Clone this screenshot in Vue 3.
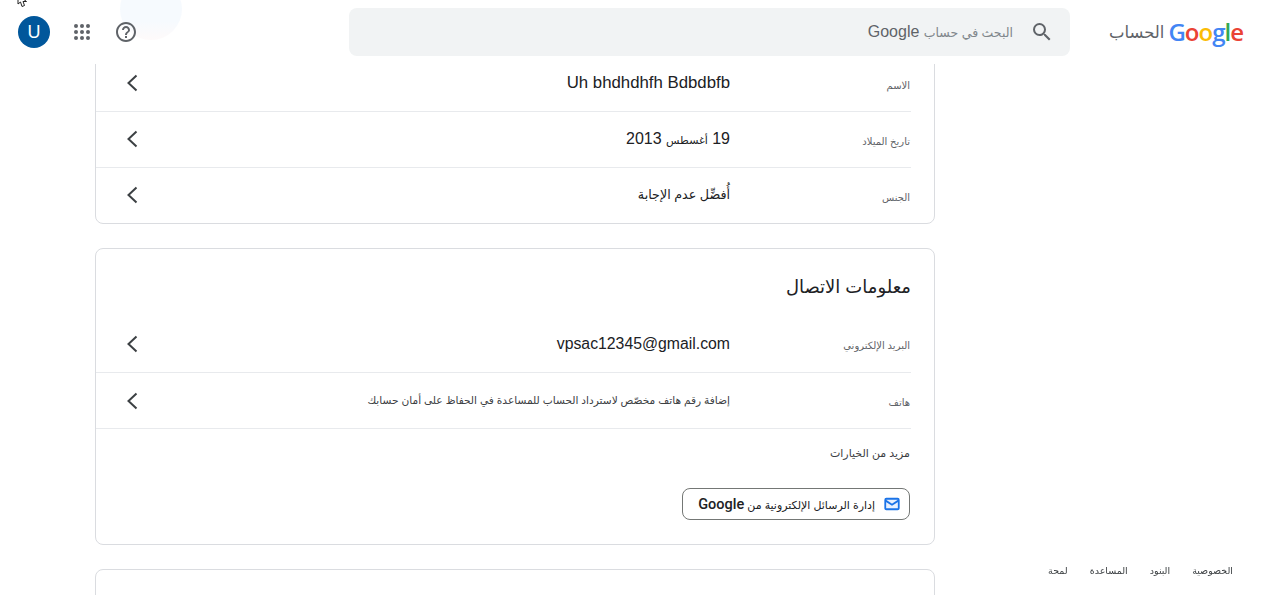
<script setup>
const logoLetters = [
  { ch: 'G', color: '#4285f4' },
  { ch: 'o', color: '#ea4335' },
  { ch: 'o', color: '#fbbc05' },
  { ch: 'g', color: '#4285f4' },
  { ch: 'l', color: '#34a853' },
  { ch: 'e', color: '#ea4335' },
]

const footerLinks = ['الخصوصية', 'البنود', 'المساعدة', 'لمحة']
</script>

<template>
  <div class="page" dir="rtl">
    <header class="topbar">
      <div class="logo">
        <span class="logo-word" dir="ltr">
          <span v-for="(l, i) in logoLetters" :key="i" :style="{ color: l.color }">{{ l.ch }}</span>
        </span>
        <span class="logo-product">الحساب</span>
      </div>
      <div class="search">
        <svg class="search-icon" width="24" height="24" viewBox="0 0 24 24">
          <path fill="#5f6368" d="M15.5 14h-.79l-.28-.27A6.47 6.47 0 0 0 16 9.5 6.5 6.5 0 1 0 9.5 16c1.61 0 3.09-.59 4.23-1.57l.27.28v.79l5 4.99L20.49 19l-4.99-5zm-6 0C7.01 14 5 11.99 5 9.500S7.01 5 9.500 5 14 7.010 14 9.500 11.990 14 9.500 14z" />
        </svg>
        <span class="search-text"><span class="ar">البحث في حساب</span> Google</span>
      </div>
      <div class="ghost-photo"></div>
      <div class="bar-icons">
        <svg class="help" width="24" height="24" viewBox="0 0 24 24">
          <path fill="#5f6368" d="M11 18h2v-2h-2v2zm1-16C6.480 2 2 6.480 2 12s4.480 10 10 10 10-4.480 10-10S17.520 2 12 2zm0 18c-4.410 0-8-3.590-8-8s3.590-8 8-8 8 3.590 8 8-3.590 8-8 8zm0-14c-2.210 0-4 1.790-4 4h2c0-1.100.9-2 2-2s2 .9 2 2c0 2-3 1.750-3 5h2c0-2.250 3-2.500 3-5 0-2.210-1.790-4-4-4z" />
        </svg>
        <svg class="apps" width="24" height="24" viewBox="0 0 24 24">
          <g fill="#5f6368">
            <circle cx="6" cy="6" r="2" /><circle cx="12" cy="6" r="2" /><circle cx="18" cy="6" r="2" />
            <circle cx="6" cy="12" r="2" /><circle cx="12" cy="12" r="2" /><circle cx="18" cy="12" r="2" />
            <circle cx="6" cy="18" r="2" /><circle cx="12" cy="18" r="2" /><circle cx="18" cy="18" r="2" />
          </g>
        </svg>
        <div class="avatar">U</div>
      </div>
      <svg class="pointer" width="12" height="8" viewBox="0 0 12 8">
        <path fill="#fff" stroke="#222" stroke-width="1" d="M1-5V4L3.500 2 5 6.500 7.500 5.500 6 1.500 9.500 1.500Z" />
      </svg>
    </header>

    <main class="content">
      <section class="card card-first">
        <div class="row">
          <div class="row-label">الاسم</div>
          <div class="row-value latin name">Uh bhdhdhfh Bdbdbfb</div>
          <svg class="chevron" width="24" height="24" viewBox="0 0 24 24">
            <path fill="none" stroke="#3c4043" stroke-width="2" d="M16.500 4.500 8.500 12l8 7.500" />
          </svg>
        </div>
        <div class="row">
          <div class="row-label">تاريخ الميلاد</div>
          <div class="row-value latin">19 <span class="month">أغسطس</span> 2013</div>
          <svg class="chevron" width="24" height="24" viewBox="0 0 24 24">
            <path fill="none" stroke="#3c4043" stroke-width="2" d="M16.500 4.500 8.500 12l8 7.500" />
          </svg>
        </div>
        <div class="row">
          <div class="row-label">الجنس</div>
          <div class="row-value ar-value">أُفضِّل عدم الإجابة</div>
          <svg class="chevron" width="24" height="24" viewBox="0 0 24 24">
            <path fill="none" stroke="#3c4043" stroke-width="2" d="M16.500 4.500 8.500 12l8 7.500" />
          </svg>
        </div>
      </section>

      <section class="card card-contact">
        <h2 class="card-title">معلومات الاتصال</h2>
        <div class="row">
          <div class="row-label">البريد الإلكتروني</div>
          <div class="row-value latin email">vpsac12345@gmail.com</div>
          <svg class="chevron" width="24" height="24" viewBox="0 0 24 24">
            <path fill="none" stroke="#3c4043" stroke-width="2" d="M16.500 4.500 8.500 12l8 7.500" />
          </svg>
        </div>
        <div class="row">
          <div class="row-label">هاتف</div>
          <div class="row-value small">إضافة رقم هاتف مخصّص لاسترداد الحساب للمساعدة في الحفاظ على أمان حسابك</div>
          <svg class="chevron" width="24" height="24" viewBox="0 0 24 24">
            <path fill="none" stroke="#3c4043" stroke-width="2" d="M16.500 4.500 8.500 12l8 7.500" />
          </svg>
        </div>
        <div class="more">
          <div class="more-title">مزيد من الخيارات</div>
          <button class="mail-btn">
            <svg width="18" height="18" viewBox="0 0 24 24">
              <rect x="3" y="5" width="18" height="14" rx="1.500" fill="#e8f0fe" stroke="#1a73e8" stroke-width="2.400" />
              <path fill="none" stroke="#1a73e8" stroke-width="2.400" d="M3.500 7.500 12 13l8.500-5.500" />
            </svg>
            <span class="mail-text">إدارة الرسائل الإلكترونية من <b>Google</b></span>
          </button>
        </div>
      </section>

      <section class="card card-next"></section>
    </main>

    <footer class="foot">
      <span v-for="link in footerLinks" :key="link">{{ link }}</span>
    </footer>
  </div>
</template>

<style scoped>
.page {
  height: 595px;
  overflow: hidden;
  background: #fff;
  color: #202124;
  font-family: "Liberation Sans", Roboto, "DejaVu Sans", sans-serif;
}

.topbar {
  position: fixed;
  top: 0;
  left: 0;
  right: 0;
  height: 64px;
  display: flex;
  align-items: center;
  padding-right: 21px;
  background: #fff;
  z-index: 2;
}

.logo {
  width: 133px;
  display: flex;
  align-items: center;
  gap: 4px;
  flex-shrink: 0;
}

.logo-word {
  font-family: "Open Sans", sans-serif;
  font-size: 24px;
  font-weight: 600;
  letter-spacing: -1px;
  line-height: 28px;
}

.logo-product {
  font-size: 16.500px;
  color: #5f6368;
}

.search {
  width: 721px;
  height: 48px;
  margin-right: 40px;
  display: flex;
  align-items: center;
  background: #f1f3f4;
  border-radius: 8px;
  flex-shrink: 0;
}

.search-icon {
  margin-right: 16px;
}

.search-text {
  margin-right: 17px;
  font-size: 16px;
  color: #5f6368;
}

.search-text .ar {
  font-size: 12.500px;
  color: #80868b;
}

.bar-icons {
  position: relative;
  margin-right: 211px;
  display: flex;
  align-items: center;
}

.help {
  margin-left: 20px;
}

.apps {
  margin-left: 20px;
}

.avatar {
  width: 32px;
  height: 32px;
  border-radius: 50%;
  background: #01579b;
  color: #fff;
  font-size: 18px;
  line-height: 32px;
  text-align: center;
}

.ghost-photo {
  position: absolute;
  left: 120px;
  top: -22px;
  width: 62px;
  height: 62px;
  border-radius: 50%;
  background: linear-gradient(#f6fafe 70%, #fefafa);
}

.pointer {
  position: absolute;
  left: 17px;
  top: 0;
}

.content {
  width: 840px;
  margin-right: 329px;
  display: flex;
  flex-direction: column;
  gap: 24px;
}

.card {
  border: 1px solid #dadce0;
  border-radius: 8px;
  background: #fff;
}

.card-first {
  margin-top: 40px;
  padding-top: 15px;
}

.card-next {
  height: 120px;
}

.card-title {
  margin: 0;
  padding: 23px 23px 14px 0;
  font-size: 18px;
  font-weight: 400;
  line-height: 30px;
}

.row {
  height: 57px;
  margin-right: 23px;
  display: flex;
  align-items: center;
  border-bottom: 1px solid #e8eaed;
  box-sizing: border-box;
}

.card-first .row {
  height: 56px;
}

.card-first .row:last-child {
  height: 55px;
  border-bottom: 0;
}

.card-contact .row + .row {
  height: 56px;
}

.row-label {
  width: 181px;
  padding-top: 3px;
  padding-right: 1px;
  box-sizing: border-box;
  flex-shrink: 0;
  font-size: 10px;
  color: #5f6368;
}

.row-value {
  flex: 1;
  font-size: 16px;
}

.card-first .row-value,
.card-first .chevron {
  margin-bottom: 2px;
}

.name {
  font-size: 16.800px;
}

.email {
  font-size: 15.800px;
}

.month {
  font-size: 11px;
}

.ar-value {
  font-size: 12.700px;
}

.row-value.small {
  margin-bottom: 2px;
  font-size: 10.600px;
  color: #3c4043;
}

.chevron {
  margin-left: 24px;
  flex-shrink: 0;
}

.more {
  padding: 14px 24px 24px 0;
}

.more-title {
  font-size: 11px;
  line-height: 20px;
  color: #3c4043;
}

.mail-btn {
  margin-top: 25px;
  width: 228px;
  height: 32px;
  display: flex;
  align-items: center;
  gap: 8px;
  padding: 0 8px 0 0;
  box-sizing: border-box;
  background: #fff;
  border: 1px solid #747775;
  border-radius: 8px;
  font-family: inherit;
  font-size: 11px;
  color: #202124;
}

.mail-text {
  white-space: nowrap;
}

.mail-btn b {
  font-family: Roboto, sans-serif;
  font-size: 14.500px;
  font-weight: 500;
}

.foot {
  position: fixed;
  left: 0;
  right: 0;
  bottom: 16px;
  display: flex;
  gap: 22px;
  padding-right: 31px;
  font-size: 9.500px;
  line-height: 16px;
  color: #3c4043;
}
</style>

<style>
html,
body {
  margin: 0;
  overflow: hidden;
}
</style>
